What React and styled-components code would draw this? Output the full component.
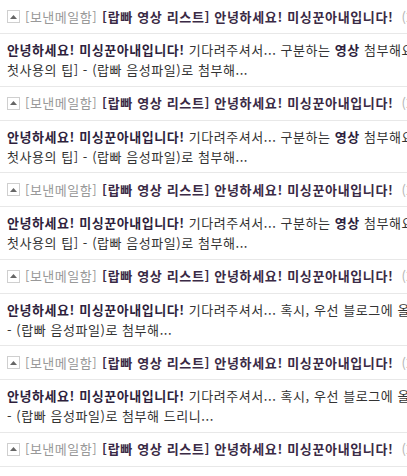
import React from "react";
import styled, { createGlobalStyle } from "styled-components";

const Global = createGlobalStyle`
  html, body { margin: 0; padding: 0; background: #fff; overflow: hidden; }
  body { font-family: "Noto Sans CJK KR", "Noto Sans", sans-serif; font-size: 13px; color: #333; }
`;

const List = styled.div`
  width: 407px;
  overflow: hidden;
`;

const Header = styled.div`
  display: flex;
  align-items: center;
  height: 33px;
  padding-left: 7px;
  border-bottom: 1px solid #e8e8e8;
  white-space: nowrap;
  overflow: hidden;
  line-height: 20px;
`;

const ToggleBox = styled.span`
  flex: none;
  width: 11px;
  height: 11px;
  border: 1px solid #cfcfcf;
  display: flex;
  align-items: center;
  justify-content: center;
  margin-right: 5px;
  background: #fff;
`;

const Folder = styled.span`
  flex: none;
  color: #999;
  margin-right: 5px;
  letter-spacing: 0.5px;
`;

const Title = styled.span`
  flex: none;
  color: #3a2a45;
  font-weight: bold;
  letter-spacing: 0.65px;
`;

const Meta = styled.span`
  flex: none;
  color: #b5b5b5;
  margin-left: 8px;
`;

const Body = styled.div`
  padding: 6px 0 5.5px 7px;
  border-bottom: 1px solid #e8e8e8;
  line-height: 20px;
  overflow: hidden;
`;

const Line = styled.div`
  white-space: nowrap;
  overflow: hidden;
  letter-spacing: 0.55px;
`;

const Strong = styled.b`
  color: #2e1f3d;
  font-weight: bold;
`;

const items = [
  { a: "기다려주셔서... 구분하는 ", k: "영상", b: " 첨부해요 [랍빠", l2: "첫사용의 팁] - (랍빠 음성파일)로 첨부해..." },
  { a: "기다려주셔서... 구분하는 ", k: "영상", b: " 첨부해요 [랍빠", l2: "첫사용의 팁] - (랍빠 음성파일)로 첨부해..." },
  { a: "기다려주셔서... 구분하는 ", k: "영상", b: " 첨부해요 [랍빠", l2: "첫사용의 팁] - (랍빠 음성파일)로 첨부해..." },
  { a: "기다려주셔서... 혹시, 우선 블로그에 올려", k: "", b: "", l2: "- (랍빠 음성파일)로 첨부해..." },
  { a: "기다려주셔서... 혹시, 우선 블로그에 올려", k: "", b: "", l2: "- (랍빠 음성파일)로 첨부해 드리니..." },
  null,
];

function Arrow() {
  return (
    <svg width="7" height="4" viewBox="0 0 7 4">
      <path d="M0 4 L3.5 0 L7 4 Z" fill="#666" />
    </svg>
  );
}

export default function App() {
  return (
    <>
      <Global />
      <List lang="ko">
        {items.map((it, i) => (
          <React.Fragment key={i}>
            <Header>
              <ToggleBox><Arrow /></ToggleBox>
              <Folder>[보낸메일함]</Folder>
              <Title>[랍빠 영상 리스트] 안녕하세요! 미싱꾼아내입니다!</Title>
              <Meta>(2</Meta>
            </Header>
            {it && (
              <Body>
                <Line>
                  <Strong>안녕하세요! 미싱꾼아내입니다!</Strong> {it.a}
                  {it.k && <Strong>{it.k}</Strong>}
                  {it.b}
                </Line>
                <Line>{it.l2}</Line>
              </Body>
            )}
          </React.Fragment>
        ))}
      </List>
    </>
  );
}
